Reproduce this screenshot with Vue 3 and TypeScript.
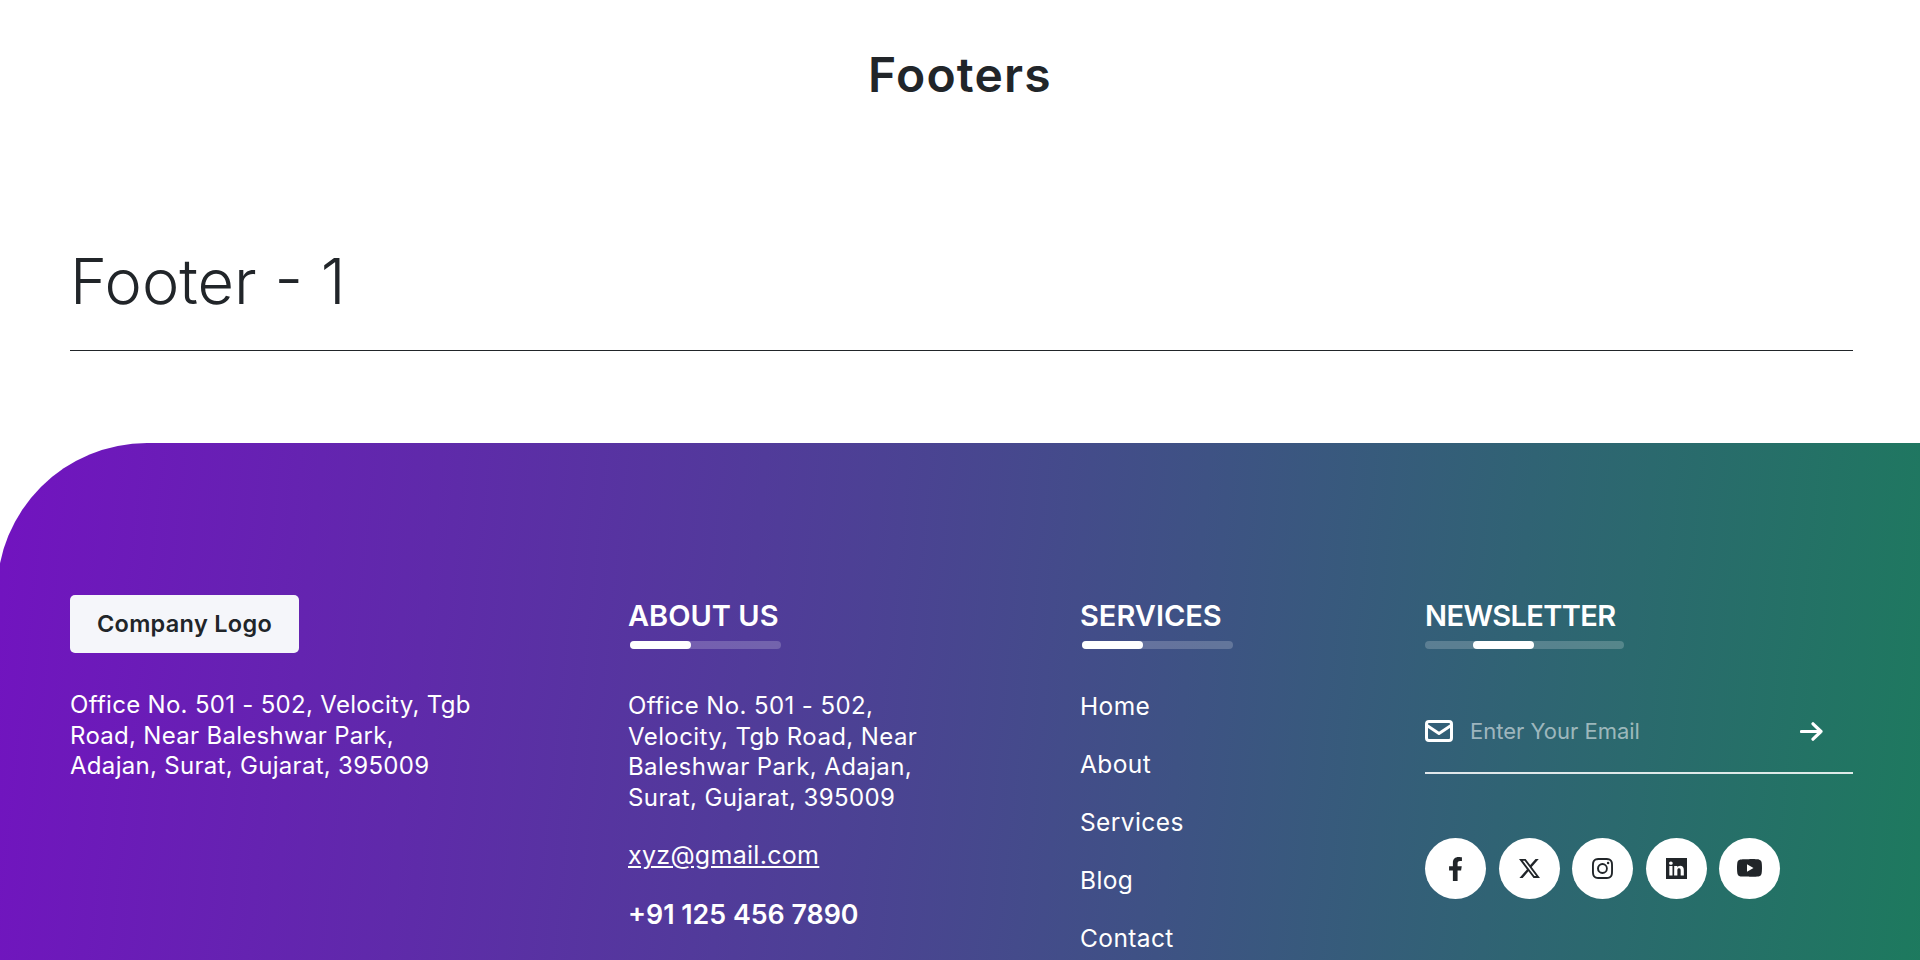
<script setup lang="ts">
interface Social {
  name: string;
  viewBox: string;
  d: string;
  size: string;
}

const links = ["Home", "About", "Services", "Blog", "Contact"];

const socials: Social[] = [
  {
    name: "facebook",
    viewBox: "0 0 320 512",
    size: "fb",
    d: "M279.14 288l14.22-92.66h-88.91v-60.13c0-25.35 12.42-50.06 52.24-50.06h40.42V6.26S260.43 0 225.36 0c-73.22 0-121.08 44.38-121.08 124.72v70.62H22.89V288h81.39v224h100.17V288z",
  },
  {
    name: "x",
    viewBox: "0 0 16 16",
    size: "sq",
    d: "M12.6.75h2.454l-5.36 6.142L16 15.25h-4.937l-3.867-5.07-4.425 5.07H.316l5.733-6.57L0 .75h5.063l3.495 4.633L12.601.75Zm-.86 13.028h1.36L4.323 2.145H2.865z",
  },
  {
    name: "instagram",
    viewBox: "0 0 16 16",
    size: "sq",
    d: "M8 0C5.829 0 5.556.01 4.703.048 3.85.088 3.269.222 2.76.42a3.9 3.9 0 0 0-1.417.923A3.9 3.9 0 0 0 .42 2.76C.222 3.268.087 3.85.048 4.7.01 5.555 0 5.827 0 8.001c0 2.172.01 2.444.048 3.297.04.852.174 1.433.372 1.942.205.526.478.972.923 1.417.444.445.89.719 1.416.923.51.198 1.09.333 1.942.372C5.555 15.99 5.827 16 8 16s2.444-.01 3.298-.048c.851-.04 1.434-.174 1.943-.372a3.9 3.9 0 0 0 1.416-.923c.445-.445.718-.891.923-1.417.197-.509.332-1.09.372-1.942C15.99 10.445 16 10.173 16 8s-.01-2.445-.048-3.299c-.04-.851-.175-1.433-.372-1.941a3.9 3.9 0 0 0-.923-1.417A3.9 3.9 0 0 0 13.24.42c-.51-.198-1.092-.333-1.943-.372C10.443.01 10.172 0 7.998 0zm-.717 1.442h.718c2.136 0 2.389.007 3.232.046.78.035 1.204.166 1.486.275.373.145.64.319.92.599s.453.546.598.92c.11.281.24.705.275 1.485.039.843.047 1.096.047 3.231s-.008 2.389-.047 3.232c-.035.78-.166 1.203-.275 1.485a2.5 2.5 0 0 1-.599.919c-.28.28-.546.453-.92.598-.28.11-.704.24-1.485.276-.843.038-1.096.047-3.232.047s-2.39-.009-3.233-.047c-.78-.036-1.203-.166-1.485-.276a2.5 2.5 0 0 1-.92-.598 2.5 2.5 0 0 1-.6-.92c-.109-.281-.24-.705-.275-1.485-.038-.843-.046-1.096-.046-3.233s.008-2.388.046-3.231c.036-.78.166-1.204.276-1.486.145-.373.319-.64.599-.92s.546-.453.92-.598c.282-.11.705-.24 1.485-.276.738-.034 1.024-.044 2.515-.045zm4.988 1.328a.96.96 0 1 0 0 1.92.96.96 0 0 0 0-1.92m-4.27 1.122a4.109 4.109 0 1 0 0 8.217 4.109 4.109 0 0 0 0-8.217m0 1.441a2.667 2.667 0 1 1 0 5.334 2.667 2.667 0 0 1 0-5.334",
  },
  {
    name: "linkedin",
    viewBox: "0 0 16 16",
    size: "sq",
    d: "M0 0h16v16H0zm4.943 13.394V6.169H2.542v7.225zm-1.2-8.212c.837 0 1.358-.554 1.358-1.248-.015-.709-.52-1.248-1.342-1.248S2.4 3.226 2.4 3.934c0 .694.521 1.248 1.327 1.248zm4.908 8.212V9.359c0-.216.016-.432.08-.586.173-.431.568-.878 1.232-.878.869 0 1.216.662 1.216 1.634v3.865h2.401V9.25c0-2.22-1.184-3.252-2.764-3.252-1.274 0-1.845.7-2.165 1.193v.025h-.016l.016-.025V6.169h-2.4c.03.678 0 7.225 0 7.225z",
  },
  {
    name: "youtube",
    viewBox: "0 0 16 16",
    size: "yt",
    d: "M8.051 1.999h.089c.822.003 4.987.033 6.11.335a2.01 2.01 0 0 1 1.415 1.42c.101.38.172.883.22 1.402l.01.104.022.26.008.104c.065.914.073 1.77.074 1.957v.075c-.001.194-.01 1.108-.082 2.06l-.008.105-.009.104c-.05.572-.124 1.14-.235 1.558a2.01 2.01 0 0 1-1.415 1.42c-1.16.312-5.569.334-6.18.335h-.142c-.309 0-1.587-.006-2.927-.052l-.17-.006-.087-.004-.171-.007-.171-.007c-1.11-.049-2.167-.128-2.654-.26a2.01 2.01 0 0 1-1.415-1.419c-.111-.417-.185-.986-.235-1.558L.09 9.82l-.008-.104A31 31 0 0 1 0 7.68v-.123c.002-.215.01-.958.064-1.778l.007-.103.003-.052.008-.104.022-.26.01-.104c.048-.519.119-1.023.22-1.402a2.01 2.01 0 0 1 1.415-1.42c.487-.13 1.544-.21 2.654-.26l.17-.007.172-.006.086-.003.171-.007A100 100 0 0 1 7.858 2zM6.4 5.209v4.818l4.157-2.408z",
  },
];
</script>

<template>
  <div class="page">
    <h1 class="page-title">Footers</h1>

    <section class="section-head">
      <h2>Footer - 1</h2>
    </section>

    <footer class="footer">
      <div class="col">
        <button class="logo" type="button">Company Logo</button>
        <p class="address first">
          Office No. 501 - 502, Velocity, Tgb<br />
          Road, Near Baleshwar Park,<br />
          Adajan, Surat, Gujarat, 395009
        </p>
      </div>

      <div class="col">
        <h3>ABOUT US</h3>
        <div class="bar"><span></span></div>
        <p class="address">
          Office No. 501 - 502,<br />
          Velocity, Tgb Road, Near<br />
          Baleshwar Park, Adajan,<br />
          Surat, Gujarat, 395009
        </p>
        <a class="mail" href="#">xyz@gmail.com</a>
        <a class="phone" href="#">+91 125 456 7890</a>
      </div>

      <div class="col">
        <h3>SERVICES</h3>
        <div class="bar"><span></span></div>
        <ul class="links">
          <li v-for="link in links" :key="link"><a href="#">{{ link }}</a></li>
        </ul>
      </div>

      <div class="col">
        <h3 class="tight">NEWSLETTER</h3>
        <div class="bar wide"><span></span></div>
        <form class="subscribe" @submit.prevent>
          <svg class="mail-icon" viewBox="0 0 28 22" fill="none" stroke="currentColor" stroke-width="3" stroke-linejoin="round">
            <rect x="1.5" y="1.5" width="25" height="19" rx="2.5" />
            <path d="M2 5.5 14 13.5 26 5.5" />
          </svg>
          <input type="email" placeholder="Enter Your Email" />
          <button type="submit" aria-label="Subscribe">
            <svg viewBox="0 0 23 19" fill="none" stroke="currentColor" stroke-width="3.2" stroke-linecap="round" stroke-linejoin="round">
              <path d="M1.5 9.5h19.5M13 1.8l8 7.7-8 7.7" />
            </svg>
          </button>
        </form>
        <div class="socials">
          <a v-for="s in socials" :key="s.name" href="#" :aria-label="s.name">
            <svg :class="s.size" :viewBox="s.viewBox" fill="currentColor"><path :d="s.d" /></svg>
          </a>
        </div>
      </div>
    </footer>
  </div>
</template>

<style>
html,
body {
  margin: 0;
  background: #fff;
}
</style>

<style scoped>
.page {
  font-family: Inter, "Open Sans", sans-serif;
  color: #212529;
  overflow-x: hidden;
}

.page-title {
  margin: 0;
  padding-top: 48px;
  font-size: 48px;
  line-height: 54px;
  font-weight: 600;
  letter-spacing: 1.2px;
  text-align: center;
}

.section-head {
  margin: 0 67px 0 70px;
  padding-top: 146px;
  border-bottom: 1px solid #212529;
}

.section-head h2 {
  margin: 0;
  padding-bottom: 35px;
  font-size: 63px;
  line-height: 67px;
  font-weight: 300;
}

.footer {
  display: grid;
  grid-template-columns: 558px 452px 345px 428px;
  margin: 92px 0 0 -3px;
  padding: 152px 67px 60px 73px;
  border-top-left-radius: 150px;
  background: linear-gradient(96deg, #7213c0 0%, #1d7a5e 100%);
  color: #fff;
}

.col {
  min-width: 0;
}

.logo {
  display: block;
  width: 229px;
  height: 58px;
  padding: 0;
  border: 0;
  border-radius: 5px;
  background: #f5f6fa;
  color: #212529;
  font: 600 23.5px/1 Inter, sans-serif;
  letter-spacing: 0.3px;
}

.address {
  margin: 0;
  padding-top: 42px;
  font-size: 24px;
  line-height: 30.6px;
  letter-spacing: 0.4px;
}

.address.first {
  padding-top: 37px;
  letter-spacing: 0.3px;
}

h3 {
  margin: 0;
  padding-top: 3px;
  font-size: 29px;
  line-height: 36px;
  font-weight: 600;
}

h3.tight {
  letter-spacing: -0.6px;
}

.bar {
  position: relative;
  width: 151px;
  height: 8px;
  margin: 7px 0 0 2px;
  border-radius: 4px;
  background: rgba(255, 255, 255, 0.2);
}

.bar span {
  position: absolute;
  left: 0;
  top: 0;
  width: 61px;
  height: 100%;
  border-radius: 4px;
  background: #fff;
}

.bar.wide {
  width: 199px;
  margin-left: 0;
}

.bar.wide span {
  left: 48px;
}

.mail {
  display: block;
  margin-top: 27px;
  color: #fff;
  font-size: 25px;
  line-height: 30px;
  letter-spacing: 0.3px;
}

.phone {
  display: block;
  margin-top: 28px;
  color: #fff;
  font-size: 26.8px;
  line-height: 32px;
  font-weight: 600;
  text-decoration: none;
}

.links {
  margin: 0;
  padding: 42px 0 0;
  list-style: none;
  display: flex;
  flex-direction: column;
  gap: 28px;
  font-size: 24.5px;
  line-height: 30px;
  letter-spacing: 0.4px;
}

.links a {
  color: #fff;
  text-decoration: none;
}

.subscribe {
  display: flex;
  align-items: center;
  height: 67px;
  margin-top: 58px;
  padding-bottom: 17px;
  border-bottom: 2px solid rgba(255, 255, 255, 0.85);
  box-sizing: border-box;
}

.mail-icon {
  width: 28px;
  height: 22px;
  flex: none;
}

.subscribe input {
  flex: 1;
  min-width: 0;
  margin-left: 17px;
  padding: 0;
  border: 0;
  outline: 0;
  background: transparent;
  color: #fff;
  font: 400 22px/30px Inter, sans-serif;
}

.subscribe input::placeholder {
  color: rgba(255, 255, 255, 0.55);
}

.subscribe button {
  display: flex;
  flex: none;
  margin-right: 30px;
  padding: 0;
  border: 0;
  background: none;
  color: #fff;
}

.subscribe button svg {
  width: 23px;
  height: 19px;
}

.socials {
  display: flex;
  gap: 12.5px;
  margin-top: 64px;
}

.socials a {
  display: flex;
  align-items: center;
  justify-content: center;
  width: 61px;
  height: 61px;
  border-radius: 50%;
  background: #fff;
  color: #212529;
}

.socials .fb {
  width: 15px;
  height: 24px;
}

.socials .sq {
  width: 21px;
  height: 21px;
}

.socials .yt {
  width: 25px;
  height: 25px;
}
</style>
